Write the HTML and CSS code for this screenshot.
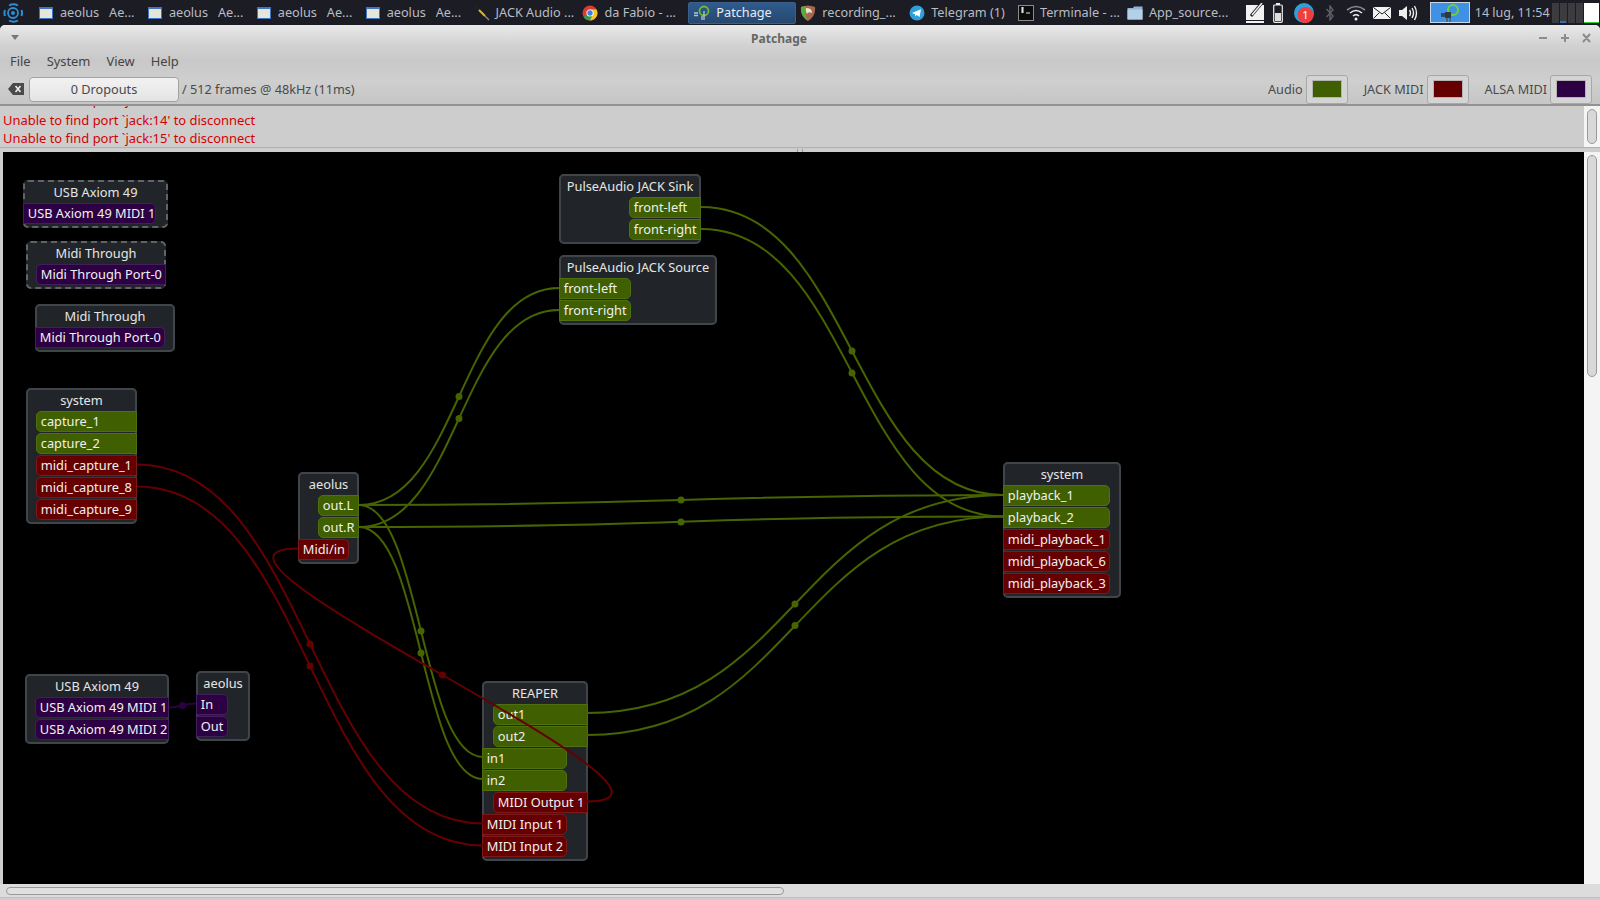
FILE: index.html
```html
<!DOCTYPE html>
<html lang="en">
<head>
    <meta charset="UTF-8">
    <title>Patchage</title>
    <link rel="stylesheet" href="styles.css">
</head>
<body>
    <svg class="defs" width="0" height="0">
        <symbol id="win-icon" viewBox="0 0 16 16">
            <rect x="1.5" y="2.5" width="13" height="11" fill="#e4e6dc" stroke="#3f74c4"/>
            <rect x="1" y="2" width="14" height="2" fill="#3f74c4"/>
        </symbol>
    </svg>

    <div class="panel">
        <div class="logo">
            <svg width="20" height="22" viewBox="0 0 20 22">
                <circle cx="10" cy="11" r="2" fill="#2a8fd8"/>
                <circle cx="10" cy="11" r="5" fill="none" stroke="#2a8fd8" stroke-width="1.8"/>
                <path d="M6 3.5 A9 9 0 0 1 15 3.5 M18.5 8 A9 9 0 0 1 18.5 14 M15 18.5 A9 9 0 0 1 6 18.5 M2 14 A9 9 0 0 1 2 8" fill="none" stroke="#2a8fd8" stroke-width="2"/>
            </svg>
        </div>
        <div class="tasks">
            <div class="task"><svg class="ico"><use href="#win-icon"/></svg><span>aeolus   Ae...</span></div>
            <div class="task"><svg class="ico"><use href="#win-icon"/></svg><span>aeolus   Ae...</span></div>
            <div class="task"><svg class="ico"><use href="#win-icon"/></svg><span>aeolus   Ae...</span></div>
            <div class="task"><svg class="ico"><use href="#win-icon"/></svg><span>aeolus   Ae...</span></div>
            <div class="task">
                <svg class="ico" viewBox="0 0 16 16">
                    <path d="M1 1 L5 5" stroke="#222" stroke-width="2"/>
                    <path d="M5 5 L11 11" stroke="#d8b840" stroke-width="2"/>
                    <path d="M11 11 L15 15" stroke="#888" stroke-width="1.5"/>
                </svg>
                <span>JACK Audio ...</span>
            </div>
            <div class="task">
                <svg class="ico" viewBox="0 0 16 16">
                    <circle cx="8" cy="8" r="7.5" fill="#d93c30"/>
                    <path d="M8 8 L1.5 12 A7.5 7.5 0 0 0 8 15.5 L11 10 Z" fill="#2f9e46"/>
                    <path d="M8 4.5 L14.6 4.5 A7.5 7.5 0 0 1 8 15.5 L11 9 Z" fill="#f6c52c"/>
                    <circle cx="8" cy="8" r="3.6" fill="#fff"/>
                    <circle cx="8" cy="8" r="2.7" fill="#3f7fe0"/>
                </svg>
                <span>da Fabio - ...</span>
            </div>
            <div class="task active">
                <svg class="ico" viewBox="0 0 16 16">
                    <circle cx="10" cy="6" r="4.5" fill="none" stroke="#6fb83a" stroke-width="1.8"/>
                    <path d="M10 6 V15 M8 15 V11 M0 8 H4 M0 10.5 H4" stroke="#b8c4c8" stroke-width="1.3" fill="none"/>
                </svg>
                <span>Patchage</span>
            </div>
            <div class="task">
                <svg class="ico" viewBox="0 0 16 16">
                    <path d="M1 2 Q8 -1 15 2 Q16 11 8 16 Q0 11 1 2 Z" fill="#a8664c"/>
                    <path d="M1 2 Q4 1 6 1.5 Q4 8 8 16 Q0 11 1 2 Z" fill="#5ea83c"/>
                    <path d="M6 3 Q12 3 12 8 Q8 6 7 9 Q5 6 6 3 Z" fill="#e8e4d8"/>
                </svg>
                <span>recording_...</span>
            </div>
            <div class="task">
                <svg class="ico" viewBox="0 0 16 16">
                    <circle cx="8" cy="8" r="7.5" fill="#2d9fdb"/>
                    <path d="M3 8 L12 4.2 L10.6 12 L7.6 10 L6.4 11.6 L6 9.2 Z" fill="#fff"/>
                </svg>
                <span>Telegram (1)</span>
            </div>
            <div class="task">
                <svg class="ico" viewBox="0 0 16 16">
                    <rect x="0.5" y="0.5" width="15" height="15" fill="#0c0c0c" stroke="#8a8a8a"/>
                    <path d="M3 3 H6 M3 5 H6 M3 7 H6 M4.5 2 V8 M8 8 H12" stroke="#e8e8e8" stroke-width="1"/>
                </svg>
                <span>Terminale - ...</span>
            </div>
            <div class="task">
                <svg class="ico" viewBox="0 0 16 16">
                    <path d="M0.5 3 H6 L7 1.5 H15.5 V14.5 H0.5 Z" fill="#8fb4d4"/>
                    <rect x="0.5" y="4.5" width="15" height="10" fill="#b4d0e6"/>
                </svg>
                <span>App_source...</span>
            </div>
        </div>
        <div class="tray">
            <svg class="tray-note" viewBox="0 0 18 20">
                <rect x="0" y="2" width="18" height="15" fill="#f2f2f2"/>
                <rect x="0" y="18" width="18" height="2" fill="#f2f2f2"/>
                <path d="M5 13 L15 1" stroke="#1c1c24" stroke-width="3"/>
                <path d="M6 12 L16 0" stroke="#f2f2f2" stroke-width="1.5"/>
            </svg>
            <svg class="tray-batt" viewBox="0 0 10 20">
                <rect x="3" y="0" width="4" height="2" fill="#eee"/>
                <rect x="0.7" y="2" width="8.6" height="17.3" rx="1" fill="none" stroke="#eee" stroke-width="1.2"/>
                <rect x="2" y="10" width="6" height="8" fill="#ddd"/>
            </svg>
            <svg class="tray-tg" viewBox="0 0 20 20">
                <circle cx="10" cy="10" r="10" fill="#2d9fdb"/>
                <circle cx="11.5" cy="12" r="8" fill="#ef3e3e"/>
                <text x="11.5" y="16" text-anchor="middle" class="tray-count">1</text>
            </svg>
            <svg class="tray-bt" viewBox="0 0 8 16">
                <path d="M0.5 4 L7 11 L4 15 V1 L7 5 L0.5 12" fill="none" stroke="#5f6068" stroke-width="1.4"/>
            </svg>
            <svg class="tray-wifi" viewBox="0 0 20 16">
                <path d="M1 5 Q10 -2 19 5" fill="none" stroke="#8a8a8a" stroke-width="1.6"/>
                <path d="M4 8 Q10 3 16 8" fill="none" stroke="#eee" stroke-width="1.6"/>
                <path d="M7 11 Q10 8.5 13 11" fill="none" stroke="#eee" stroke-width="1.6"/>
                <circle cx="10" cy="14" r="1.5" fill="#eee"/>
            </svg>
            <svg class="tray-mail" viewBox="0 0 18 12">
                <rect width="18" height="12" rx="1" fill="#f2f2f2"/>
                <path d="M0.5 0.5 L9 7 L17.5 0.5 M0.5 11.5 L6.5 5.5 M17.5 11.5 L11.5 5.5" fill="none" stroke="#1c1c24" stroke-width="1"/>
            </svg>
            <svg class="tray-vol" viewBox="0 0 19 16">
                <path d="M0 5 H3 L8 1 V15 L3 11 H0 Z" fill="#eee"/>
                <path d="M10.5 5 Q12.5 8 10.5 11 M13 3 Q16 8 13 13 M15.5 1 Q19.5 8 15.5 15" fill="none" stroke="#eee" stroke-width="1.4"/>
            </svg>
            <div class="tray-box">
                <svg width="24" height="20" viewBox="0 0 24 20">
                    <circle cx="15" cy="7" r="5" fill="none" stroke="#6fd03a" stroke-width="2"/>
                    <path d="M3 11 H7 M3 13 H7" stroke="#333" stroke-width="1.5"/>
                    <rect x="7" y="9" width="6" height="6" fill="#2d3a40"/>
                    <path d="M9 15 V19 M12 15 V19" stroke="#555" stroke-width="1.5"/>
                </svg>
            </div>
            <div class="clock">14 lug, 11:54</div>
            <div class="meters">
                <div class="meter"></div>
                <div class="meter"><div class="meter-fill"></div></div>
                <div class="meter"></div>
                <div class="meter"></div>
                <div class="meter-white"></div>
            </div>
        </div>
    </div>

    <div class="window">
        <div class="header">
            <div class="titlebar">
                <div class="title-menu"><span class="title-arrow"></span></div>
                <div class="title">Patchage</div>
                <div class="title-btns">
                    <svg width="66" height="12" viewBox="0 0 66 12">
                        <path d="M5 6 H13 M27 6 H35 M31 2 V10 M49 2 L56 10 M56 2 L49 10" stroke="#8c8c8c" stroke-width="2" fill="none"/>
                    </svg>
                </div>
            </div>
            <div class="menubar">
                <div class="menu-item">File</div>
                <div class="menu-item">System</div>
                <div class="menu-item">View</div>
                <div class="menu-item">Help</div>
            </div>
            <div class="toolbar">
                <svg class="clear-icon" width="16" height="12" viewBox="0 0 16 12">
                    <path d="M5 0 H16 V12 H5 L0 6 Z" fill="#4a4a4a"/>
                    <path d="M7.5 3 L12.5 9 M12.5 3 L7.5 9" stroke="#eee" stroke-width="1.6"/>
                </svg>
                <div class="dropouts">0 Dropouts</div>
                <div class="frames">/ 512 frames @ 48kHz (11ms)</div>
                <div class="spacer"></div>
                <div class="legend">
                    <span>Audio</span>
                    <div class="swatch"><div class="swatch-in audio"></div></div>
                </div>
                <div class="legend">
                    <span>JACK MIDI</span>
                    <div class="swatch"><div class="swatch-in jack"></div></div>
                </div>
                <div class="legend">
                    <span>ALSA MIDI</span>
                    <div class="swatch"><div class="swatch-in alsa"></div></div>
                </div>
            </div>
        </div>

        <div class="messages">
            <div class="log">
                <div>Unable to find port `jack:13' to disconnect</div>
                <div>Unable to find port `jack:14' to disconnect</div>
                <div>Unable to find port `jack:15' to disconnect</div>
            </div>
            <div class="vscroll"><div class="thumb thumb-log"></div></div>
        </div>
        <div class="sash"><div class="sash-grip"></div></div>

        <div class="main">
            <div class="canvas">
                <div class="module dashed m-usb1">
                    <div class="mod-title">USB Axiom 49</div>
                    <div class="port alsa in">USB Axiom 49 MIDI 1</div>
                </div>
                <div class="module dashed m-thru1">
                    <div class="mod-title">Midi Through</div>
                    <div class="port alsa out">Midi Through Port-0</div>
                </div>
                <div class="module m-thru2">
                    <div class="mod-title">Midi Through</div>
                    <div class="port alsa in">Midi Through Port-0</div>
                </div>
                <div class="module m-capture">
                    <div class="mod-title">system</div>
                    <div class="port audio out">capture_1</div>
                    <div class="port audio out">capture_2</div>
                    <div class="port jack out">midi_capture_1</div>
                    <div class="port jack out">midi_capture_8</div>
                    <div class="port jack out">midi_capture_9</div>
                </div>
                <div class="module m-aeolus">
                    <div class="mod-title">aeolus</div>
                    <div class="port audio out">out.L</div>
                    <div class="port audio out">out.R</div>
                    <div class="port jack in">Midi/in</div>
                </div>
                <div class="module m-sink">
                    <div class="mod-title">PulseAudio JACK Sink</div>
                    <div class="port audio out">front-left</div>
                    <div class="port audio out">front-right</div>
                </div>
                <div class="module m-source">
                    <div class="mod-title">PulseAudio JACK Source</div>
                    <div class="port audio in">front-left</div>
                    <div class="port audio in">front-right</div>
                </div>
                <div class="module m-playback">
                    <div class="mod-title">system</div>
                    <div class="port audio in">playback_1</div>
                    <div class="port audio in">playback_2</div>
                    <div class="port jack in">midi_playback_1</div>
                    <div class="port jack in">midi_playback_6</div>
                    <div class="port jack in">midi_playback_3</div>
                </div>
                <div class="module m-reaper">
                    <div class="mod-title">REAPER</div>
                    <div class="port audio out">out1</div>
                    <div class="port audio out">out2</div>
                    <div class="port audio in">in1</div>
                    <div class="port audio in">in2</div>
                    <div class="port jack out">MIDI Output 1</div>
                    <div class="port jack in">MIDI Input 1</div>
                    <div class="port jack in">MIDI Input 2</div>
                </div>
                <div class="module m-usb2">
                    <div class="mod-title">USB Axiom 49</div>
                    <div class="port alsa out">USB Axiom 49 MIDI 1</div>
                    <div class="port alsa out">USB Axiom 49 MIDI 2</div>
                </div>
                <div class="module m-aeolus2">
                    <div class="mod-title">aeolus</div>
                    <div class="port alsa in">In</div>
                    <div class="port alsa in">Out</div>
                </div>

                <svg class="wires" width="1581" height="732" viewBox="3 152 1581 732">
                    <g class="wire-audio">
                        <path d="M701 207 C852 207 852 495 1003 495"/>
                        <path d="M701 229 C852 229 852 516.5 1003 516.5"/>
                        <path d="M359 505 C459 505 459 288 559 288"/>
                        <path d="M359 527 C459 527 459 310 559 310"/>
                        <path d="M359 505 C681 505 681 495 1003 495"/>
                        <path d="M359 527 C681 527 681 516.5 1003 516.5"/>
                        <path d="M359 505 C421 505 421 757 483 757"/>
                        <path d="M359 527 C421 527 421 779 483 779"/>
                        <path d="M587 713 C795 713 795 495 1003 495"/>
                        <path d="M587 735 C795 735 795 516.5 1003 516.5"/>
                        <circle cx="852" cy="351" r="3.5"/>
                        <circle cx="852" cy="373" r="3.5"/>
                        <circle cx="459" cy="396.5" r="3.5"/>
                        <circle cx="459" cy="418.5" r="3.5"/>
                        <circle cx="681" cy="500" r="3.5"/>
                        <circle cx="681" cy="522" r="3.5"/>
                        <circle cx="421" cy="631" r="3.5"/>
                        <circle cx="421" cy="653" r="3.5"/>
                        <circle cx="795" cy="604" r="3.5"/>
                        <circle cx="795" cy="625.5" r="3.5"/>
                    </g>
                    <g class="wire-jack">
                        <path d="M137 464.5 C310 464.5 310 823.5 483 823.5"/>
                        <path d="M137 486.5 C310 486.5 310 845.5 483 845.5"/>
                        <path d="M587 801.5 C737 801.5 148 548.5 298 548.5"/>
                        <circle cx="310" cy="644" r="3.5"/>
                        <circle cx="310" cy="666" r="3.5"/>
                        <circle cx="442.5" cy="675" r="3.5"/>
                    </g>
                    <g class="wire-alsa">
                        <path d="M169 707.5 C182 707.5 182 703.5 196 703.5"/>
                        <circle cx="182.5" cy="705.5" r="3.5"/>
                    </g>
                </svg>
            </div>
            <div class="vscroll"><div class="thumb thumb-main"></div></div>
        </div>
        <div class="hscroll"><div class="hthumb"></div></div>
    </div>
</body>
</html>
```

FILE: styles.css
```css
*{
    box-sizing:border-box;
}
html,body{
    margin:0;
    height:100%;
    overflow:hidden;
}
body{
    background-color:#1c1c24;
    font-family:"Noto Sans",sans-serif;
    font-size:12.7px;
}
.defs{
    display:block;
    height:0;
}

/* desktop panel */
.panel{
    display:flex;
    align-items:center;
    height:25px;
    color:#b9bdc4;
}
.logo{
    display:flex;
    width:35px;
    padding-left:3px;
}
.tasks{
    display:flex;
    height:25px;
    align-items:center;
}
.task{
    display:flex;
    align-items:center;
    width:108.9px;
    padding-left:3px;
    white-space:pre;
}
.task span{
    margin-top:-2px;
}
.ico{
    width:16px;
    height:16px;
    margin-right:6px;
    flex:none;
}
.task.active{
    width:107.9px;
    margin-right:1px;
    height:22px;
    padding-left:5px;
    background:linear-gradient(#2f5b8c,#26486f);
    border:1px solid #35608f;
    border-radius:2px;
    color:#e8edf2;
}
.tray{
    display:flex;
    align-items:center;
    height:25px;
    flex:1;
}
.tray-note{width:18px;height:20px;margin-left:13px;}
.tray-batt{width:10px;height:20px;margin-left:9px;}
.tray-tg{width:20px;height:20px;margin-left:11px;}
.tray-count{
    fill:#fff;
    font-family:"Noto Sans",sans-serif;
    font-size:11px;
}
.tray-bt{width:8px;height:16px;margin-left:12px;}
.tray-wifi{width:20px;height:16px;margin-left:12px;}
.tray-mail{width:18px;height:12px;margin-left:7px;}
.tray-vol{width:19px;height:16px;margin-left:8px;}
.tray-box{
    display:flex;
    justify-content:center;
    width:40px;
    height:21px;
    margin-left:12px;
    background-color:#4090e4;
    border:1px solid #c8d8e8;
}
.clock{
    width:72px;
    margin-left:5px;
    margin-top:-1px;
    font-size:12.5px;
    white-space:nowrap;
}
.meters{
    display:flex;
    gap:1px;
    height:20px;
    margin-left:5px;
}
.meter{
    display:flex;
    align-items:flex-end;
    justify-content:center;
    width:7px;
    background-color:#3b3b40;
}
.meter-fill{
    width:6px;
    height:2px;
    background-color:#2a6fc0;
}
.meter-white{
    width:15px;
    background-color:#fff;
    border-bottom:1px solid #2fd02f;
}

/* window */
.window{
    display:flex;
    flex-direction:column;
    height:875px;
    background-color:#cdcdcd;
    border-radius:5px 5px 0 0;
    overflow:hidden;
}
.header{
    background:linear-gradient(#e9e9e9 0,#d2d2d2 20px,#c8c8c8 36px,#cfcfcf 56px,#c6c6c6 78px);
    border-bottom:2px solid #929292;
}
.titlebar{
    display:flex;
    align-items:center;
    height:25px;
}
.title-menu{
    width:24px;
    padding-left:11px;
}
.title-arrow{
    display:block;
    width:0;
    height:0;
    border-left:4px solid transparent;
    border-right:4px solid transparent;
    border-top:5px solid #777;
}
.title{
    flex:1;
    padding-top:2px;
    text-align:center;
    font-weight:bold;
    font-size:12px;
    color:#666;
}
.title-btns{
    display:flex;
    width:66px;
}
.menubar{
    display:flex;
    height:22px;
    align-items:center;
    padding-left:2px;
    font-size:12.9px;
    color:#444;
}
.menu-item{
    padding:0 8px;
}
.toolbar{
    display:flex;
    align-items:center;
    height:32px;
    padding:2px 8px 0 8px;
    color:#4a4a4a;
}
.clear-icon{
    flex:none;
}
.dropouts{
    width:150px;
    height:25px;
    margin-left:5px;
    line-height:23px;
    text-align:center;
    background:linear-gradient(#f2f2f2,#e4e4e4);
    border:1px solid #a2a2a2;
    border-radius:4px;
}
.frames{
    margin-left:3px;
}
.spacer{
    flex:1;
}
.legend{
    display:flex;
    align-items:center;
    gap:3px;
    margin-left:16px;
}
.swatch{
    display:flex;
    align-items:center;
    justify-content:center;
    width:42px;
    height:29px;
    background-color:#d4d4d4;
    border:1px solid #a8a8a8;
    border-radius:3px;
}
.swatch-in{
    width:30px;
    height:18px;
    border:1px solid #b4b4b4;
}
.swatch-in.audio{background-color:#3f5f00;}
.swatch-in.jack{background-color:#660000;}
.swatch-in.alsa{background-color:#2d0043;}

/* message pane */
.messages{
    display:flex;
    height:41px;
}
.log{
    display:flex;
    flex-direction:column;
    justify-content:flex-end;
    flex:1;
    padding-left:3px;
    overflow:hidden;
    color:#d40000;
    font-size:12.95px;
    line-height:18px;
}
.log div{
    flex:none;
    white-space:nowrap;
}
.log div:first-child{
    margin-bottom:2px;
}
.vscroll{
    flex:none;
    width:16px;
    padding:3px 3px 0 3px;
    background-color:#f4f4f4;
}
.thumb{
    width:10px;
    background-color:#d8d8d8;
    border:1px solid #9a9a9a;
    border-radius:5px;
}
.thumb-log{height:35px;}
.thumb-main{height:222px;}
.sash{
    display:flex;
    justify-content:center;
    height:5px;
    background-color:#cdcdcd;
    border-top:1px solid #b0b0b0;
}
.sash-grip{
    width:6px;
    height:3px;
    margin-top:1px;
    border-left:1px solid #999;
    border-right:1px solid #999;
}

/* patch canvas */
.main{
    display:flex;
    height:732px;
    padding-left:3px;
}
.canvas{
    position:relative;
    flex:1;
    background-color:#000;
    overflow:hidden;
}
.wires{
    position:absolute;
    left:0;
    top:0;
}
.wires path{
    fill:none;
    stroke-width:2;
}
.wire-audio path{stroke:#466400;}
.wire-audio circle{fill:#466400;}
.wire-jack path{stroke:#660000;}
.wire-jack circle{fill:#660000;}
.wire-alsa path{stroke:#2d0043;}
.wire-alsa circle{fill:#2d0043;}

.module{
    position:absolute;
    z-index:0;
    display:flex;
    flex-direction:column;
    gap:1px;
    padding-bottom:4px;
    background-color:#212529;
    border-radius:5px;
    font-size:12.8px;
    color:#e6e6e6;
}
.module::before{
    content:"";
    position:absolute;
    inset:0;
    z-index:-1;
    border:2px solid #3f4549;
    border-radius:5px;
}
.module.dashed::before{
    border-style:dashed;
    border-color:#5e6468;
}
.mod-title{
    height:22px;
    line-height:25px;
    text-align:center;
    white-space:nowrap;
}
.port{
    height:21px;
    padding-left:3.8px;
    line-height:19px;
    border:1px solid;
    border-radius:5px;
    white-space:nowrap;
    color:#f0f0f0;
}
.port.in{
    width:var(--in);
    border-radius:0 5px 5px 0;
}
.port.out{
    width:var(--out);
    align-self:flex-end;
    border-radius:5px 0 0 5px;
}
.port.audio{background-color:#3f5f00;border-color:#4f7010;}
.port.jack{background-color:#660000;border-color:#7a1a1a;}
.port.alsa{background-color:#2d0043;border-color:#41205a;}

.m-usb1{left:20px;top:28px;width:145px;--in:133px;}
.m-thru1{left:23px;top:89px;width:140px;--out:130px;}
.m-thru2{left:32px;top:152px;width:140px;--in:130px;}
.m-capture{left:23px;top:236px;width:111px;--out:101px;}
.m-aeolus{left:295px;top:320px;width:61px;--out:41px;--in:51px;}
.m-sink{left:556px;top:22px;width:142px;--out:72px;}
.m-source{left:556px;top:103px;width:158px;--in:72px;}
.m-playback{left:1000px;top:310px;width:118px;--in:107px;}
.m-reaper{left:479px;top:529px;width:106px;--out:95px;--in:85px;}
.m-usb2{left:22px;top:522px;width:144px;--out:134px;}
.m-aeolus2{left:193px;top:519px;width:54px;--in:32px;}

.hscroll{
    flex:none;
    height:14px;
    padding:3px 0 0 6px;
    background-color:#dcdcdc;
    border-bottom:1px solid #c0c0c0;
}
.hthumb{
    width:778px;
    height:8px;
    background-color:#e0e0e0;
    border:1px solid #9a9a9a;
    border-radius:4px;
}
```
